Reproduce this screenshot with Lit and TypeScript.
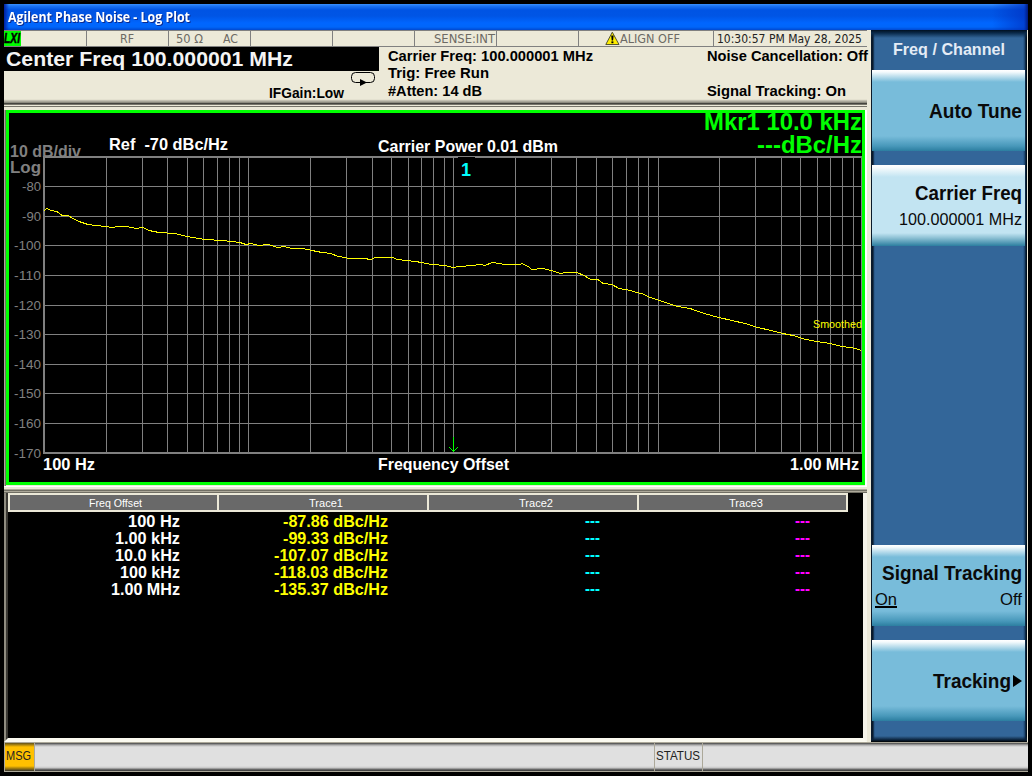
import { LitElement, html, svg, css } from "lit";
import { customElement } from "lit/decorators.js";

/** A line of real text fitted to a fixed advance width; its baseline lies `size` pixels below its top. */
const label = (text: string, width: number, size: number, cls = "") => html`
  <svg class="label ${cls}" width=${width} height=${size + 4}>
    <text x="0" y=${size} font-size=${size} textLength=${width} lengthAdjust="spacingAndGlyphs" xml:space="preserve">${text}</text>
  </svg>`;

const HORIZONTALS = [186, 216, 245, 275, 305, 334, 364, 393, 423];
const VERTICALS = [
  106, 142, 167, 187, 203, 217, 229, 239, 248, 310, 346, 372, 391, 408, 421, 433, 444, 453,
  515, 551, 576, 596, 612, 626, 638, 648, 658, 719, 755, 781, 800, 817, 830, 842, 853, 861,
];
const TRACE =
  "44,210 47,208 51,210 57,211 62,215 68,215 73,218 79,221 88,224 96,225 106,226 112,227 118,226 127,226 136,228 143,227 149,230 159,232 175,233 187,236 205,239 223,240 240,242 246,244 251,243 259,245 268,244 278,247 284,246 292,248 303,248 312,250 322,252 331,253 338,256 345,257 349,258 364,258 371,259 375,257 393,257 397,259 406,260 416,261 421,262 432,264 445,265 453,267 460,266 472,265 481,264 485,265 492,262 499,263 505,264 520,264 522,263 528,266 532,269 543,268 551,270 561,273 565,272 577,272 584,275 591,279 598,279 603,283 612,284 619,288 631,290 636,292 642,293 650,297 660,300 668,303 678,306 690,308 704,313 719,317 732,320 745,323 758,327 771,330 783,333 793,335 806,339 817,341 830,343 842,346 856,348 861,350";

const plotText = (t: string, x: number, y: number, w: number, size: number, fill = "#fff", weight = "bold") => svg`
  <text x=${x} y=${y} font-size=${size} fill=${fill} font-weight=${weight} textLength=${w}
    lengthAdjust="spacingAndGlyphs" xml:space="preserve">${t}</text>`;

@customElement("phase-plot")
class PhasePlot extends LitElement {
  static styles = css`
    :host { display: block; width: 859px; height: 375px; }
    svg { display: block; font-family: "Liberation Sans", Arial, sans-serif; }
    .lines { shape-rendering: crispEdges; }
  `;
  render() {
    return html`<svg width="859" height="375" viewBox="6 110 859 375">
      <rect x="6" y="110" width="859" height="375" fill="#000" />
      ${plotText("10 dB/div", 10, 157, 71, 16.5, "#808080")}
      <rect x="43" y="156" width="819" height="30" fill="#000" />
      ${plotText("Log", 10, 173, 31, 16.5, "#808080")}
      <g class="lines" fill="#808080">
        ${HORIZONTALS.map((y) => svg`<rect x="43" y=${y} width="819" height="1" />`)}
        ${VERTICALS.map((x) => svg`<rect x=${x} y="157" width="1" height="296" />`)}
        <rect x="43" y="156" width="819" height="2" />
        <rect x="43" y="452" width="819" height="2" />
        <rect x="43" y="156" width="2" height="298" />
        <rect x="458" y="157" width="17" height="2" fill="#000" />
        <polyline points=${TRACE} transform="translate(0 .5)" fill="none" stroke="#ffff00" stroke-width="1" />
      </g>
      <g class="lines" fill="#00ff00">
        <rect x="453" y="437" width="1" height="15" />
        <rect x="452" y="450" width="3" height="1" />
        <rect x="451" y="449" width="1" height="1" /><rect x="455" y="449" width="1" height="1" />
        <rect x="450" y="448" width="1" height="1" /><rect x="456" y="448" width="1" height="1" />
        <rect x="449" y="447" width="1" height="1" /><rect x="457" y="447" width="1" height="1" />
      </g>
      ${[186, 216, 245, 275, 305, 334, 364, 393, 423, 453].map((y, i) =>
        i < 2
          ? plotText("-" + (80 + i * 10), 22, y + 5, 19, 13, "#808080", "normal")
          : plotText("-" + (80 + i * 10), 14, y + 5, 27, 13, "#808080", "normal"))}
      ${plotText("Ref  -70 dBc/Hz", 109, 150, 119, 16.5)}
      ${plotText("Carrier Power 0.01 dBm", 378, 152, 180, 16.5)}
      ${plotText("1", 461, 176, 10, 18, "#00ffff")}
      ${plotText("Mkr1 10.0 kHz", 704, 130, 158, 23, "#00ff00")}
      ${plotText("---dBc/Hz", 757, 153, 105, 23, "#00ff00")}
      ${plotText("Smoothed", 813, 328, 49, 11, "#ffff00", "normal")}
      ${plotText("100 Hz", 43, 470, 52, 16.5)}
      ${plotText("Frequency Offset", 378, 470, 131, 16.5)}
      ${plotText("1.00 MHz", 790, 470, 69, 16.5)}
      <rect class="lines" x="7.5" y="111.5" width="856" height="372" fill="none" stroke="#00ff00" stroke-width="3" />
    </svg>`;
  }
}

const ROWS: [string, number, string, number][] = [
  ["100 Hz", 52, "-87.86 dBc/Hz", 105],
  ["1.00 kHz", 65, "-99.33 dBc/Hz", 105],
  ["10.0 kHz", 65, "-107.07 dBc/Hz", 114],
  ["100 kHz", 60, "-118.03 dBc/Hz", 114],
  ["1.00 MHz", 69, "-135.37 dBc/Hz", 114],
];

@customElement("app-root")
class AppRoot extends LitElement {
  static styles = css`
    :host { display: block; width: 1032px; height: 776px; background: #000; overflow: hidden;
      font-family: "Liberation Sans", Arial, sans-serif; }
    * { box-sizing: border-box; }
    svg { display: block; flex: none; }
    .label { overflow: visible; fill: currentColor; font-weight: bold; }
    .reg { font-weight: normal; }
    .tahoma { font-weight: normal; font-family: "DejaVu Sans", sans-serif; }
    .title-text { font-family: "Open Sans", sans-serif; font-weight: 700; filter: drop-shadow(1px 1px 0 #0a2a90); }
    .frame { padding: 4px; height: 776px; display: flex; flex-direction: column; }
    .title { height: 26px; flex: none; padding: 4px 0 0 4px; color: #fff;
      background: linear-gradient(90deg, #0020a0 0, transparent 5px calc(100% - 36px), #0030c0aa calc(100% - 4px), #001a80),
        linear-gradient(#3a92ff 0, #1c74f4 2px, #0054e4 6px, #0055e5 12px, #0066ff 19px, #0066fa 23px, #0048d0 26px); }
    .body { display: flex; height: 712px; flex: none; }
    .left { width: 863px; flex: none; background: #ece9d8; height: 712px; display: flex; flex-direction: column; }
    .gap { width: 4px; flex: none; background: #ece9d8; }
    .edge { width: 1px; background: #ece9d8; margin-left: auto; }

    .strip { display: flex; height: 17px; flex: none; border-top: 1px solid #808080; border-bottom: 1px solid #808080; color: #6d6a64; width: 863px; }
    .cell { border-right: 1px solid #808080; width: 82px; flex: none; display: flex; }
    .c-lxi { width: 83px; }
    .lxi { width: 17px; height: 15px; background: #00ff00; color: #000; font-style: italic; }
    .lxi .label { margin-top: -2px; stroke: #000; stroke-width: .5px; }
    .c-rf { padding-left: 33px; }
    .c-input { padding-left: 7px; gap: 20px; }
    .c-sense { padding-left: 19px; }
    .c-align { width: 135px; padding-left: 26px; }
    .c-date { color: #222; border-right: 0; width: 150px; padding-left: 3px; }

    .head { display: flex; width: 863px; height: 52px; flex: none; color: #000; position: relative; }
    .h-left { width: 384px; }
    .freq { width: 375px; height: 24px; background: #000; color: #f4f4f4; padding-left: 2px; display: flex; }
    .freq .label { margin-top: -1px; }
    .gain { display: flex; padding-left: 265px; }
    .gain .label { margin-top: 12px; }
    .loop { margin-left: 7px; }
    .h-mid { width: 319px; }
    .h-right { width: 160px; }
    .h-mid, .h-right { display: flex; flex-direction: column; margin-top: -1px; }
    .h-mid .label { height: 17px; }
    .h-mid .label:last-child { margin-top: 1px; }
    .h-right { gap: 16px; }

    .bevel { width: 863px; height: 11px; flex: none;
      background: linear-gradient(#e4e1d0 0 1px, #c4c1b2 1px 2px, #aaa89a 2px 3px, #8c8a7e 3px 4px, #44443e 4px 5px, #77756a 5px 6px, #ece9d8 6px 7px, #77756a 7px 8px, #ece9d8 8px); }
    .plot-wrap { width: 863px; height: 376px; flex: none; display: flex; padding-left: 2px; border-right: 2px solid #fff;
      background: linear-gradient(90deg, #aca899 1px, #716f64 1px 2px, #ece9d8 2px); }
    .split { width: 863px; height: 7px; flex: none;
      background: linear-gradient(#fff 1px, #ece9d8 1px 3px, #aca899 3px 4px, #716f64 4px 5px, #aca899 5px 6px, #716f64 6px); }
    .table { width: 863px; height: 249px; flex: none; background: #000;
      border-left: 4px ridge #8f8c80; border-right: 4px solid #f6f4ea; border-bottom: 4px solid #fbfaf0; }
    .thead { display: flex; width: 840px; height: 19px; color: #fff; }
    .th { width: 210px; height: 19px; background: #696969; border: 2px solid #ece9d8; border-left-width: 1px; border-right-width: 1px; display: flex; }
    .th:first-child { border-left-width: 2px; }
    .th:last-child { border-right-width: 2px; }
    .rows { display: flex; flex-direction: column; margin-top: -2px; }
    .row { display: flex; height: 17px; }
    .off { width: 172px; display: flex; justify-content: flex-end; color: #fff; }
    .val { width: 208px; display: flex; justify-content: flex-end; color: #ff0; }
    .dash { width: 212px; display: flex; justify-content: flex-end; color: #0ff; }
    .dash + .dash { width: 210px; color: #f0f; }

    .panel { width: 156px; height: 712px; flex: none; padding: 0 2px 0 1px;
      background: linear-gradient(#001020 0, #0a2a4a 3px, transparent 8px calc(100% - 6px), #0a2038 calc(100% - 2px), #000),
        linear-gradient(90deg, #0a1a2c 2px, #24507c 3px, #336699 4px 152px, #1a4068 154px, #001020 155px); }
    .ptitle { height: 40px; padding: 8px 0 0 21px; color: #e4ecf6; }
    .key { width: 153px; height: 81px; margin-bottom: 14px; color: #0a0a0a; padding: 28px 3px 0 0; display: flex; flex-direction: column; align-items: flex-end;
      background: linear-gradient(#fff 0, #f4fafc 2px, #78bcda 12px 66px, #4898ba 76px, #2c7ea0 81px); }
    .key.sel { margin-bottom: 299px; background: linear-gradient(#fff 0, #fbfdfe 2px, #c2e4f2 12px 68px, #8cc0d4 73px, #2c7ea0 81px); }
    .key.two { padding-top: 15px; }
    .sub { margin-top: 4px; display: flex; justify-content: space-between; width: 100%; padding-left: 3px; }
    .sub.end { justify-content: flex-end; }
    .on { border-bottom: 2px solid #000; height: 20px; }
    .arrowrow { display: flex; }
    .tri { margin: 7px 0 0 2px; }

    .status { height: 30px; flex: none; display: flex; border-top: 1px solid #aca899; border-bottom: 1px solid #aca899; border-left: 1px solid #aca899; color: #222;
      background: linear-gradient(#444 0, #777 1px, #a8a8a8 2px, #c8c8c8 3px, #e0e0e0 4px 23px, #c4c4c4 25px, #777 26px, #333 28px); }
    .msg { width: 30px; border-right: 1px solid #aca899; padding: 5px 0 0 1px;
      background: linear-gradient(#60501a 0, #ffc000 4px 23px, #8a6c10 26px, #333 28px); }
    .s-mid { width: 620px; border-right: 1px solid #aca899; }
    .s-status { width: 48px; border-right: 1px solid #aca899; padding: 5px 0 0 1px; }
    .m78 { padding-left: 79px; }
    .m89 { padding-left: 90px; }
  `;

  render() {
    return html`
      <div class="frame">
        <div class="title">${label("Agilent Phase Noise - Log Plot", 182, 14, "title-text")}</div>
        <div class="body">
          <div class="left">
            <div class="strip">
              <div class="cell c-lxi"><div class="lxi">${label("LXI", 16, 14)}</div></div>
              <div class="cell c-rf">${label("RF", 14, 12, "tahoma")}</div>
              <div class="cell c-input">${label("50 Ω", 27, 12, "tahoma")}${label("AC", 15, 12, "tahoma")}</div>
              <div class="cell"></div>
              <div class="cell"></div>
              <div class="cell c-sense">${label("SENSE:INT", 61, 12, "tahoma")}</div>
              <div class="cell"></div>
              <div class="cell c-align">
                <svg width="15" height="15" viewBox="0 0 15 15">
                  <path d="M7.3 1.2 L14 13.5 H.8 Z" fill="#ffee00" stroke="#555530" />
                  <path d="M6.2 4.5 h2.4 l-.5 5 h-1.4z" fill="#000" /><rect x="6.4" y="10.4" width="2" height="1.8" fill="#000" />
                </svg>
                ${label("ALIGN OFF", 60, 12, "tahoma")}
              </div>
              <div class="cell c-date">${label("10:30:57 PM May 28, 2025", 145, 12, "tahoma")}</div>
            </div>
            <div class="head">
              <div class="h-left">
                <div class="freq">${label("Center Freq 100.000001 MHz", 287, 20)}</div>
                <div class="gain">
                  ${label("IFGain:Low", 75, 15)}
                  <svg class="loop" width="25" height="16" viewBox="0 0 25 16">
                    <rect x=".5" y="1.5" width="23" height="10" rx="4" fill="none" stroke="#000" />
                    <path d="M9 8 L16 11.5 L9 15 Z" fill="#000" />
                  </svg>
                </div>
              </div>
              <div class="h-mid">
                ${label("Carrier Freq: 100.000001 MHz", 205, 15)}
                ${label("Trig: Free Run", 101, 15)}
                ${label("#Atten: 14 dB", 94, 15)}
              </div>
              <div class="h-right">
                ${label("Noise Cancellation: Off", 161, 15)}
                ${label("Signal Tracking: On", 139, 15)}
              </div>
            </div>
            <div class="bevel"></div>
            <div class="plot-wrap"><phase-plot></phase-plot></div>
            <div class="split"></div>
            <div class="table">
              <div class="thead">
                <div class="th m78">${label("Freq Offset", 53, 11.5, "reg")}</div>
                ${["Trace1", "Trace2", "Trace3"].map((t) => html`<div class="th m89">${label(t, 34, 11.5, "reg")}</div>`)}
              </div>
              <div class="rows">
                ${ROWS.map(([f, fw, v, vw]) => html`<div class="row">
                  <div class="off">${label(f, fw, 16.5)}</div>
                  <div class="val">${label(v, vw, 16.5)}</div>
                  <div class="dash">${label("---", 15, 16)}</div>
                  <div class="dash">${label("---", 15, 16)}</div>
                </div>`)}
              </div>
            </div>
          </div>
          <div class="gap"></div>
          <div class="panel">
            <div class="ptitle">${label("Freq / Channel", 112, 17)}</div>
            <div class="key">${label("Auto Tune", 93, 20)}</div>
            <div class="key two sel">
              ${label("Carrier Freq", 107, 20)}
              <div class="sub end">${label("100.000001 MHz", 123, 16.5, "reg")}</div>
            </div>
            <div class="key two">
              ${label("Signal Tracking", 140, 20)}
              <div class="sub"><div class="on">${label("On", 22, 16.5, "reg")}</div>${label("Off", 22, 16.5, "reg")}</div>
            </div>
            <div class="key">
              <div class="arrowrow">${label("Tracking", 78, 20)}
                <svg class="tri" width="9" height="12"><path d="M0 0 L9 6 L0 12Z" /></svg>
              </div>
            </div>
          </div>
          <div class="edge"></div>
        </div>
        <div class="status">
          <div class="msg">${label("MSG", 25, 12, "reg")}</div>
          <div class="s-mid"></div>
          <div class="s-status">${label("STATUS", 44, 12, "reg")}</div>
        </div>
      </div>`;
  }
}
